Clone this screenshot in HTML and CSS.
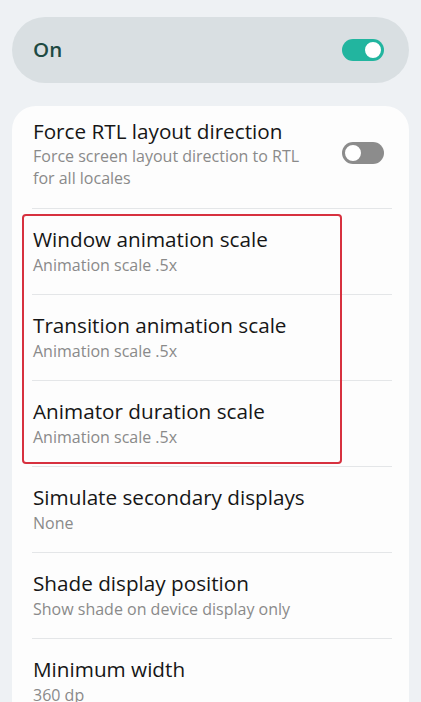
FILE: index.html
```html
<!DOCTYPE html>
<html lang="en">
<head>
  <meta charset="UTF-8">
  <meta name="viewport" content="width=device-width, initial-scale=1.0">
  <title>Developer options</title>
  <link rel="stylesheet" href="styles.css">
</head>
<body>
  <div class="master">
    <span class="master-label">On</span>
    <div class="switch on"><div class="thumb"></div></div>
  </div>

  <div class="card">
    <div class="row row-switch">
      <div class="texts">
        <div class="title">Force RTL layout direction</div>
        <div class="sub">Force screen layout direction to RTL<br>for all locales</div>
      </div>
      <div class="switch off"><div class="thumb"></div></div>
    </div>

    <div class="highlight">
      <div class="row">
        <div class="title">Window animation scale</div>
        <div class="sub">Animation scale .5x</div>
      </div>
      <div class="row">
        <div class="title">Transition animation scale</div>
        <div class="sub">Animation scale .5x</div>
      </div>
      <div class="row">
        <div class="title">Animator duration scale</div>
        <div class="sub">Animation scale .5x</div>
      </div>
    </div>

    <div class="row">
      <div class="title">Simulate secondary displays</div>
      <div class="sub">None</div>
    </div>
    <div class="row">
      <div class="title">Shade display position</div>
      <div class="sub">Show shade on device display only</div>
    </div>
    <div class="row">
      <div class="title">Minimum width</div>
      <div class="sub">360 dp</div>
    </div>
  </div>
</body>
</html>
```

FILE: styles.css
```css
body {
  background-color: #eef1f4;
  font-family: "Open Sans", Roboto, sans-serif;
  margin: 0;
  padding: 17px 12px 0;
  height: 702px;
  overflow: hidden;
  box-sizing: border-box;
}
.master {
  background-color: #d9dfe2;
  border-radius: 33px;
  height: 66px;
  display: flex;
  align-items: center;
  justify-content: space-between;
  padding: 0 25px 0 21px;
}
.master-label {
  font-size: 20.5px;
  font-weight: 600;
  color: #1e4a42;
  margin-top: -2px;
}
.switch {
  width: 42px;
  height: 22px;
  border-radius: 11px;
  position: relative;
  flex-shrink: 0;
}
.switch .thumb {
  position: absolute;
  top: 1px;
  width: 16px;
  height: 16px;
  border-radius: 50%;
  background-color: #fff;
  border: 2px solid;
}
.switch.on {
  background-color: #22b59f;
}
.switch.on .thumb {
  right: 1px;
  border-color: #22b59f;
}
.switch.off {
  background-color: #8c8c8c;
}
.switch.off .thumb {
  left: 1px;
  border-color: #8c8c8c;
}
.card {
  background-color: #fdfdfd;
  border-radius: 24px;
  margin-top: 23px;
  padding: 0 0 40px;
}
.row {
  padding: 16px 0 17px 1px;
  margin: 0 17px 0 20px;
  border-bottom: 1px solid #e4e6e8;
}
.row-switch {
  display: flex;
  justify-content: space-between;
  align-items: flex-start;
  padding-top: 11px;
  padding-bottom: 19px;
}
.row-switch .switch {
  margin-top: 25px;
  margin-right: 8px;
}
.row-switch .sub {
  line-height: 22px;
}
.title {
  font-size: 20.7px;
  line-height: 28px;
  color: #161616;
}
.sub {
  font-size: 16px;
  line-height: 24px;
  color: #8a8a8a;
}
.highlight {
  position: relative;
}
.highlight::after {
  content: "";
  position: absolute;
  top: 5px;
  bottom: 3px;
  left: 10px;
  width: 320px;
  border: 2px solid #d7313f;
  border-radius: 4px;
  box-sizing: border-box;
}
```
